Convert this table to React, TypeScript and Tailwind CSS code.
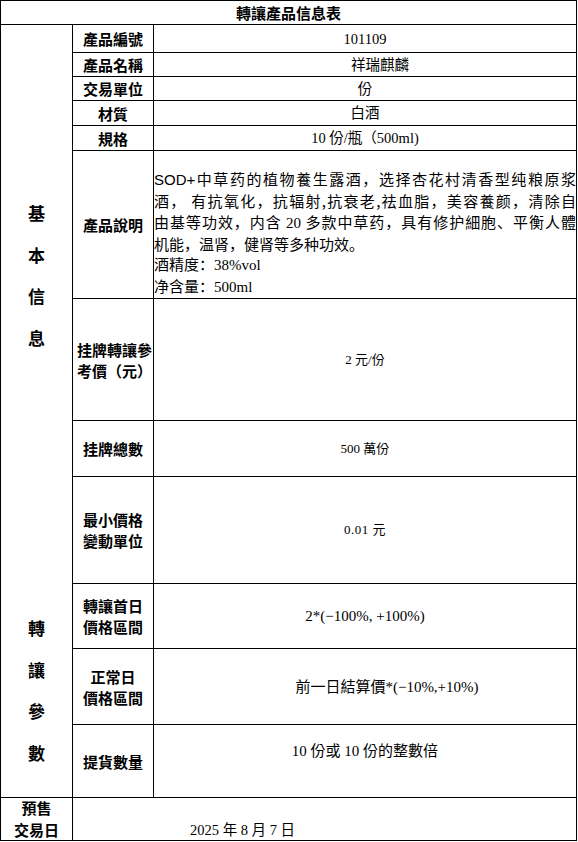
import React from 'react';

// 表格線用 gap-px + 黑底做出來
const cell = 'bg-white flex items-center justify-center';
const label = "font-['Noto_Sans_CJK_TC',sans-serif] font-bold text-[15px] leading-[21px] text-black text-center";
const value = "font-['Liberation_Serif','Noto_Sans_CJK_TC',serif] text-black";

const descLines: { text: React.ReactNode; justify: boolean }[] = [
  { text: <><span className="font-['Liberation_Sans',sans-serif]">SOD+</span>中草药的植物養生露酒，选择杏花村清香型纯粮原浆</>, justify: true },
  { text: '酒， 有抗氧化，抗辐射,抗衰老,祛血脂，美容養颜，清除自', justify: true },
  { text: <>由基等功效，内含 <span className="font-['Liberation_Serif',serif]">20</span> 多款中草药，具有修护細胞、平衡人體</>, justify: true },
  { text: '机能，温肾，健肾等多种功效。', justify: false },
  { text: <>酒精度：<span className="font-['Liberation_Serif',serif]">38%vol</span></>, justify: false },
  { text: <>净含量：<span className="font-['Liberation_Serif',serif]">500ml</span></>, justify: false },
];

export default function App() {
  return (
    <div className="w-[578px] h-[842px] bg-white">
      <div className="w-[577px] bg-black p-px grid gap-px grid-cols-[71px_80px_422px] grid-rows-[23px_27px_23px_23px_24px_24px_147px_121px_55px_106px_64px_75px_72px_42px]">
        {/* 標題 */}
        <div className={`${cell} col-span-3`}>
          <span className="font-['Noto_Sans_CJK_TC',sans-serif] font-bold text-[15px] leading-[20px]">轉讓產品信息表</span>
        </div>

        {/* 左側大欄 */}
        <div className="bg-white row-span-12 flex flex-col items-center pt-[167px] font-['Noto_Sans_CJK_TC',sans-serif] font-bold text-[17px] leading-[41.5px]">
          <div className="flex flex-col items-center">
            <span>基</span><span>本</span><span>信</span><span>息</span>
          </div>
          <div className="flex flex-col items-center mt-[249px]">
            <span>轉</span><span>讓</span><span>參</span><span>數</span>
          </div>
        </div>

        <div className={cell}><span className={label}>產品編號</span></div>
        <div className={cell}><span className={`${value} text-[14.5px] leading-[20px]`}>101109</span></div>

        <div className={cell}><span className={label}>產品名稱</span></div>
        <div className={cell}><span className={`${value} text-[14.5px] leading-[20px] pl-[30px]`}>祥瑞麒麟</span></div>

        <div className={cell}><span className={label}>交易單位</span></div>
        <div className={cell}><span className={`${value} text-[14.5px] leading-[20px]`}>份</span></div>

        <div className={cell}><span className={label}>材質</span></div>
        <div className={cell}><span className={`${value} text-[14.5px] leading-[20px]`}>白酒</span></div>

        <div className={cell}><span className={label}>規格</span></div>
        <div className={cell}><span className={`${value} text-[14.5px] leading-[20px]`}>10 份/瓶（500ml)</span></div>

        <div className={cell}><span className={label}>產品說明</span></div>
        <div className="bg-white flex flex-col justify-end font-['Noto_Sans_CJK_SC',sans-serif] text-[15px] leading-[20.8px] text-black">
          {descLines.map((l, i) => (
            <div key={i} className={`whitespace-nowrap ${l.justify ? 'text-justify [text-align-last:justify]' : ''}`}>{l.text}</div>
          ))}
        </div>

        <div className="bg-white flex items-center pl-[4px]">
          <span className={`${label} text-left text-[14.5px] leading-[20px]`}>挂牌轉讓參<br />考價（元）</span>
        </div>
        <div className={cell}><span className={`${value} text-[13px] leading-[18px]`}>2 元/份</span></div>

        <div className={cell}><span className={label}>挂牌總數</span></div>
        <div className={cell}><span className={`${value} text-[13px] leading-[18px]`}>500 萬份</span></div>

        <div className={cell}><span className={label}>最小價格<br />變動單位</span></div>
        <div className={cell}><span className={`${value} text-[13px] leading-[18px] tracking-[0.5px]`}>0.01 元</span></div>

        <div className={cell}><span className={`${label} leading-[20px]`}>轉讓首日<br />價格區間</span></div>
        <div className={cell}><span className={`${value} text-[15px] leading-[20px]`}>2*(−100%, +100%)</span></div>

        <div className={cell}><span className={label}>正常日<br />價格區間</span></div>
        <div className={`${cell} pl-[44px]`}><span className={`${value} text-[15px] leading-[20px]`}>前一日結算價*(−10%,+10%)</span></div>

        <div className={cell}><span className={label}>提貨數量</span></div>
        <div className={`${cell} pb-[20px]`}><span className={`${value} text-[15px] leading-[20px]`}>10 份或 10 份的整數倍</span></div>

        {/* 最後一列 */}
        <div className={cell}>
          <span className={`${label} text-[14px] leading-[22px]`}>預售<br />交易日</span>
        </div>
        <div className="bg-white col-span-2 flex items-end pl-[117px] pb-px">
          <span className={`${value} text-[14.5px] leading-[17px]`}>2025 年 8 月 7 日</span>
        </div>
      </div>
    </div>
  );
}
